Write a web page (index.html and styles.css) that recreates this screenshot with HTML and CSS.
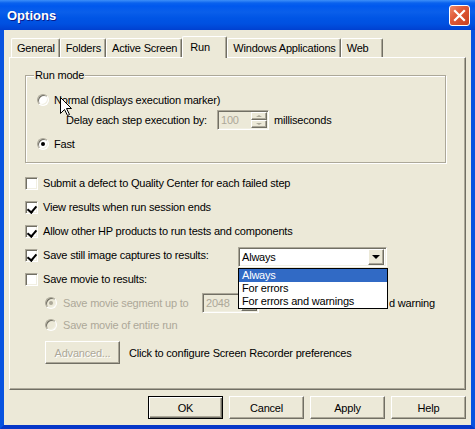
FILE: index.html
```html
<!DOCTYPE html>
<html>
<head>
<meta charset="utf-8">
<title>Options</title>
<link rel="stylesheet" href="styles.css">
</head>
<body>
<div class="window">
  <div class="titlebar">
    <span class="title">Options</span>
    <span class="close">
      <svg width="13" height="13" viewBox="0 0 13 13"><path d="M2 2 L11 11 M11 2 L2 11" stroke="#fff" stroke-width="2.2" stroke-linecap="square"/></svg>
    </span>
  </div>

  <div class="frame">
    <div class="tabs">
      <div class="tab">General</div>
      <div class="tab">Folders</div>
      <div class="tab">Active Screen</div>
      <div class="tab selected">Run</div>
      <div class="tab">Windows Applications</div>
      <div class="tab">Web</div>
    </div>

    <div class="panel">
      <div class="group">
        <span class="group-label">Run mode</span>
        <div class="row mode-row">
          <span class="radio"></span>
          <span class="label">Normal (displays execution marker)</span>
        </div>
        <div class="row delay-row">
          <span class="delay-label">Delay each step execution by:</span>
          <span class="spin spin-delay">
            <span class="spin-value">100</span>
            <span class="spin-btns"><span class="spin-btn"><i class="up"></i></span><span class="spin-btn"><i class="down"></i></span></span>
          </span>
          <span class="after">milliseconds</span>
        </div>
        <div class="row mode-row fast-row">
          <span class="radio checked"></span>
          <span class="label">Fast</span>
        </div>
      </div>

      <div class="checks">
        <div class="row check-row"><span class="check"></span><span class="label">Submit a defect to Quality Center for each failed step</span></div>
        <div class="row check-row"><span class="check on"></span><span class="label">View results when run session ends</span></div>
        <div class="row check-row"><span class="check on"></span><span class="label">Allow other HP products to run tests and components</span></div>
        <div class="row check-row">
          <span class="check on"></span><span class="label combo-label">Save still image captures to results:</span>
          <span class="combo">
            <span class="combo-text">Always</span>
            <span class="combo-btn"><i class="down dark"></i></span>
            <span class="popup">
              <span class="item current">Always</span>
              <span class="item">For errors</span>
              <span class="item">For errors and warnings</span>
            </span>
          </span>
        </div>
        <div class="row check-row"><span class="check"></span><span class="label">Save movie to results:</span></div>
      </div>

      <div class="row movie-row">
        <span class="radio checked off"></span>
        <span class="label segment-label off">Save movie segment up to</span>
        <span class="spin spin-movie">
          <span class="spin-value">2048</span>
          <span class="spin-btns"><span class="spin-btn"><i class="up"></i></span><span class="spin-btn"><i class="down"></i></span></span>
        </span>
        <span class="label kb-label">d warning</span>
      </div>
      <div class="row movie-row entire-row">
        <span class="radio off"></span>
        <span class="label off">Save movie of entire run</span>
      </div>
      <div class="row advanced-row">
        <span class="btn disabled">Advanced...</span>
        <span class="label recorder-label">Click to configure Screen Recorder preferences</span>
      </div>
    </div>

    <div class="buttons">
      <span class="btn default">OK</span>
      <span class="btn">Cancel</span>
      <span class="btn">Apply</span>
      <span class="btn">Help</span>
    </div>
  </div>

  <svg class="cursor" width="13" height="20" viewBox="0 0 13 20"><path d="M0.5 0.5 V16.5 L4.5 12.5 L7.5 18.5 L9.5 17.5 L6.5 11.5 H11.5 Z" fill="#fff" stroke="#000" stroke-width="1" stroke-linejoin="miter"/></svg>
</div>
</body>
</html>
```

FILE: styles.css
```css
* {
  box-sizing: border-box;
}

body {
  margin: 0;
  background: #fff;
  font-family: "Liberation Sans", Arial, sans-serif;
  font-size: 11px;
  letter-spacing: -0.2px;
  color: #000;
}

.window {
  position: relative;
  width: 475px;
  height: 429px;
  display: flex;
  flex-direction: column;
}

/* title bar */
.titlebar {
  height: 30px;
  flex: none;
  display: flex;
  align-items: center;
  justify-content: space-between;
  padding: 0 5px 0 7px;
  background: linear-gradient(#3d8ff8 0, #0a62ee 3px, #0058ee 6px, #0a5fea 12px, #0055e5 18px, #0050e0 24px, #0046d6 28px, #003fcf 30px);
}

.title {
  color: #fff;
  font-weight: bold;
  font-size: 13px;
  letter-spacing: 0;
  text-shadow: 1px 1px #0a1c8a;
}

.close {
  width: 21px;
  height: 21px;
  border: 1px solid #fff;
  border-radius: 3px;
  background: linear-gradient(135deg, #f08a6a 0, #e05a38 40%, #c8401f 100%);
  display: flex;
  align-items: center;
  justify-content: center;
}

/* window body */
.frame {
  flex: 1;
  background: #ece9d8;
  border: solid #0853e0;
  border-width: 0 4px 4px;
  border-bottom-color: #0637c8;
  padding: 6px 5px 0;
}

.tabs {
  position: relative;
  z-index: 1;
  height: 22px;
  margin-bottom: -1px;
  padding-left: 2px;
  display: flex;
  align-items: flex-end;
}

.tab {
  height: 19px;
  min-width: 42px;
  margin-bottom: 1px;
  padding: 0 4px 0 5px;
  display: flex;
  align-items: center;
  background: #ece9d8;
  border-top: 1px solid #fff;
  border-left: 1px solid #fff;
  border-right: 1px solid #716f64;
  box-shadow: inset -1px 0 #aca899;
  border-radius: 2px 2px 0 0;
  white-space: nowrap;
}

.tab.selected {
  height: 22px;
  min-width: 45px;
  margin-bottom: 0;
  padding: 0 6px 2px 7px;
}

.panel {
  height: 333px;
  background: #ece9d8;
  border: 1px solid;
  border-color: #fff #716f64 #716f64 #fff;
  box-shadow: inset -1px -1px #aca899;
  padding-left: 15px;
  display: flex;
  flex-direction: column;
}

.row {
  display: flex;
  align-items: center;
  white-space: nowrap;
}

/* run mode group */
.group {
  position: relative;
  width: 421px;
  margin-top: 17px;
  padding: 17px 0 12px 11px;
  border: 1px solid #aca899;
  box-shadow: inset 1px 1px #fff, 1px 1px #fff;
}

.group-label {
  position: absolute;
  top: -7px;
  left: 8px;
  padding: 0 1px;
  line-height: 13px;
  background: #ece9d8;
}

.mode-row {
  height: 13px;
  gap: 5px;
}

.delay-row {
  height: 20px;
  margin-top: 4px;
}

.fast-row {
  margin-top: 7px;
}

.delay-label {
  width: 151px;
  margin-left: 29px;
}

.after {
  margin-left: 5px;
}

/* controls */
.radio {
  width: 12px;
  height: 12px;
  flex: none;
  position: relative;
  border-radius: 50%;
  background: #fff;
  border: 1px solid;
  border-color: #aca899 #fff #fff #aca899;
  box-shadow: inset 1px 1px #716f64, inset -1px -1px #f1efe2;
}

.radio.checked::after {
  content: "";
  position: absolute;
  left: 3px;
  top: 3px;
  width: 4px;
  height: 4px;
  border-radius: 50%;
  background: #000;
}

.radio.off {
  background: #ece9d8;
}

.radio.off::after {
  background: #aca899;
}

.off {
  color: #aca899;
}

.check {
  width: 13px;
  height: 13px;
  flex: none;
  position: relative;
  background: #fff;
  border: 1px solid;
  border-color: #aca899 #fff #fff #aca899;
  box-shadow: inset 1px 1px #716f64, inset -1px -1px #f1efe2;
}

.check.on::after {
  content: "";
  position: absolute;
  left: 2px;
  top: 3px;
  width: 4px;
  height: 7px;
  border: solid #000;
  border-width: 0 2px 2px 0;
  transform: translate(1px, -1px) rotate(40deg);
}

.spin {
  height: 20px;
  display: flex;
  background: #ece9d8;
  border: 1px solid;
  border-color: #aca899 #fff #fff #aca899;
  box-shadow: inset 1px 1px #716f64, inset -1px -1px #f1efe2;
  padding: 1px;
}

.spin-delay {
  width: 52px;
}

.spin-movie {
  width: 57px;
}

.spin-value {
  flex: 1;
  padding-left: 2px;
  line-height: 16px;
  color: #aca899;
}

.spin-btns {
  width: 16px;
  display: flex;
  flex-direction: column;
}

.spin-btn {
  flex: 1;
  display: flex;
  align-items: center;
  justify-content: center;
  background: #ece9d8;
  border: 1px solid;
  border-color: #fff #716f64 #716f64 #fff;
  box-shadow: inset -1px -1px #aca899;
}

i.up,
i.down {
  width: 0;
  height: 0;
  border-left: 3px solid transparent;
  border-right: 3px solid transparent;
}

i.up {
  border-bottom: 2px solid #aca899;
}

i.down {
  border-top: 2px solid #aca899;
}

i.down.dark {
  border-left-width: 4px;
  border-right-width: 4px;
  border-top: 4px solid #000;
}

/* checkbox rows */
.checks {
  margin-top: 10px;
  display: flex;
  flex-direction: column;
  gap: 4px;
}

.check-row {
  height: 20px;
  gap: 5px;
}

.combo-label {
  width: 190px;
}

.combo {
  position: relative;
  width: 149px;
  height: 20px;
  margin-top: 4px;
  display: flex;
  align-items: center;
  background: #fff;
  border: 1px solid;
  border-color: #aca899 #fff #fff #aca899;
  box-shadow: inset 1px 1px #716f64, inset -1px -1px #f1efe2;
  padding: 1px 2px 1px 1px;
}

.combo-text {
  flex: 1;
  padding-left: 2px;
}

.combo-btn {
  width: 16px;
  height: 16px;
  display: flex;
  align-items: center;
  justify-content: center;
  background: #ece9d8;
  border: 1px solid;
  border-color: #fff #716f64 #716f64 #fff;
  box-shadow: inset -1px -1px #aca899;
}

.popup {
  position: absolute;
  z-index: 3;
  left: -1px;
  top: 20px;
  width: 150px;
  display: flex;
  flex-direction: column;
  background: #fff;
  border: 1px solid #000;
}

.popup .item {
  height: 13px;
  line-height: 13px;
  padding-left: 3px;
}

.popup .item.current {
  background: #316ac5;
  color: #fff;
}

/* movie options */
.movie-row {
  height: 20px;
  margin-top: 4px;
  margin-left: 20px;
}

.entire-row {
  margin-top: 2px;
}

.movie-row .radio {
  margin-right: 6px;
}

.segment-label {
  width: 139px;
}

/* only the tail of this label shows past the open list */
.kb-label {
  margin-left: 130px;
}

.advanced-row {
  height: 23px;
  margin-top: 6px;
  margin-left: 20px;
}

.recorder-label {
  margin-left: 9px;
}

/* buttons */
.btn {
  width: 75px;
  height: 23px;
  flex: none;
  display: flex;
  align-items: center;
  justify-content: center;
  background: #ece9d8;
  border: 1px solid;
  border-color: #fff #716f64 #716f64 #fff;
  box-shadow: inset -1px -1px #aca899;
}

.btn.disabled {
  color: #aca899;
  text-shadow: 1px 1px #fff;
}

.btn.default {
  border-color: #000;
  box-shadow: inset 1px 1px #fff, inset -1px -1px #716f64, inset -2px -2px #aca899;
}

.buttons {
  margin-top: 6px;
  display: flex;
  justify-content: flex-end;
  gap: 6px;
}

.cursor {
  position: absolute;
  left: 60px;
  top: 97px;
  z-index: 5;
}
```
